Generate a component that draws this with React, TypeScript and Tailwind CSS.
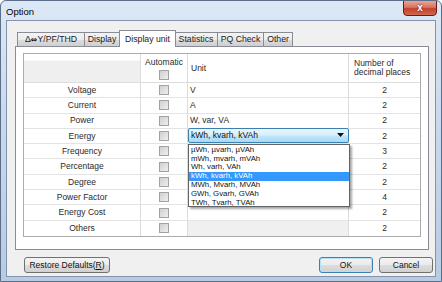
const rows = [
  { label: "Voltage", unit: "V", dec: "2" },
  { label: "Current", unit: "A", dec: "2" },
  { label: "Power", unit: "W, var, VA", dec: "2" },
  { label: "Energy", unit: "kWh, kvarh, kVAh", dec: "2", combo: true },
  { label: "Frequency", unit: "", dec: "3" },
  { label: "Percentage", unit: "", dec: "2" },
  { label: "Degree", unit: "", dec: "2" },
  { label: "Power Factor", unit: "", dec: "4" },
  { label: "Energy Cost", unit: "", dec: "2" },
  { label: "Others", unit: "", dec: "2", disabled: true },
];

const energyUnits = [
  "µWh, µvarh, µVAh",
  "mWh, mvarh, mVAh",
  "Wh, varh, VAh",
  "kWh, kvarh, kVAh",
  "MWh, Mvarh, MVAh",
  "GWh, Gvarh, GVAh",
  "TWh, Tvarh, TVAh",
];

const tabs = [
  { label: "Δ⇔Y/PF/THD", w: "w-[68px]" },
  { label: "Display", w: "w-[36px]" },
  { label: "Display unit", w: "w-[57px]", active: true },
  { label: "Statistics", w: "w-[44px]" },
  { label: "PQ Check", w: "w-[47px]" },
  { label: "Other", w: "w-[30px]" },
];

function Checkbox() {
  return (
    <div className="w-[10px] h-[10px] border border-[#a2a2a2] bg-[linear-gradient(135deg,#d0d0d0,#eeeeee)]" />
  );
}

function Button({ children, className = "" }: { children: React.ReactNode; className?: string }) {
  return (
    <div
      className={`h-[16px] flex items-center justify-center rounded-[3px] border text-[8.5px] text-[#111] bg-[linear-gradient(180deg,#f4f4f4_0%,#ebebeb_48%,#dddddd_52%,#d1d1d1_100%)] ${className}`}
    >
      {children}
    </div>
  );
}

function TabLabel({ label }: { label: string }) {
  if (!label.includes("⇔")) return <>{label}</>;
  const [a, b] = label.split("⇔");
  return (
    <>
      {a}
      <span className="font-['DejaVu_Sans',sans-serif] font-bold text-[8px]">⇔</span>
      {b}
    </>
  );
}

export default function App() {
  return (
    <div className="w-[442px] h-[282px] flex flex-col overflow-hidden rounded-t-[6px] border border-[#5d6f88] bg-[linear-gradient(180deg,#dce8f5_0%,#c9daee_40%,#b7cbe3_100%)] font-['Liberation_Sans','DejaVu_Sans',sans-serif] text-[#1a1a1a]">
      {/* title bar */}
      <div className="h-[19px] flex items-start shrink-0">
        <div className="pl-[5px] pt-[4px] text-[9.5px] text-black">Option</div>
        <div className="ml-auto mr-[4px] w-[34px] h-[16px] -mt-px flex items-center justify-center rounded-b-[4px] border border-[#6d1c12] bg-[linear-gradient(180deg,#e8a597_0%,#d8735f_45%,#c4412c_55%,#d2664f_100%)]">
          <span className="text-white font-bold text-[10px] leading-none [text-shadow:0_0_2px_#5a1208]">x</span>
        </div>
      </div>

      {/* client area */}
      <div className="mx-[5px] h-[257px] border border-[#8293ab] bg-[#f0f0f0] flex flex-col shrink-0">
        <div className="pl-[8px] pt-[8px]">
          {/* tabs */}
          <div className="flex items-end h-[17px] pl-[2px] relative z-10">
            {tabs.map((t) =>
              t.active ? (
                <div
                  key={t.label}
                  className={`${t.w} h-[17px] -mx-px -mb-px bg-white border border-b-0 border-[#898c95] flex items-start justify-center pt-[2px] text-[8.7px] relative z-10`}
                >
                  <TabLabel label={t.label} />
                </div>
              ) : (
                <div
                  key={t.label}
                  className={`${t.w} h-[14px] -ml-px first:ml-0 border border-b-0 border-[#898c95] flex items-center justify-center text-[8.7px] bg-[linear-gradient(180deg,#f3f3f3_0%,#ebebeb_50%,#dddddd_51%,#cfcfcf_100%)]`}
                >
                  <TabLabel label={t.label} />
                </div>
              ),
            )}
          </div>

          {/* panel */}
          <div className="w-[414px] h-[204px] bg-white border border-[#898c95] pl-[7px] pt-[6px]">
            <div className="w-[398px] border border-[#ababab] text-[8.5px] text-[#2a2a2a]">
              {/* header */}
              <div className="flex h-[29px] border-b border-[#dcdcdc]">
                <div className="w-[117px] border-r border-[#dcdcdc] bg-[linear-gradient(180deg,#ffffff_0%,#ffffff_22%,#efefef_26%,#efefef_100%)]" />
                <div className="w-[47px] border-r border-[#dcdcdc] flex flex-col items-center pt-[4px] gap-[3px]">
                  <span className="leading-none">Automatic</span>
                  <Checkbox />
                </div>
                <div className="w-[161px] border-r border-[#dcdcdc] flex items-center pl-[3px]">Unit</div>
                <div className="flex-1 flex flex-col justify-center pl-[5px] leading-[9px]">
                  <span>Number of</span>
                  <span>decimal places</span>
                </div>
              </div>

              {rows.map((r, i) => (
                <div
                  key={r.label}
                  className={`flex h-[15.3px] ${i < rows.length - 1 ? "border-b border-[#e3e3e3]" : ""}`}
                >
                  <div className="w-[117px] border-r border-[#dcdcdc] flex items-center justify-center">{r.label}</div>
                  <div className="w-[47px] border-r border-[#dcdcdc] flex items-center justify-center">
                    <Checkbox />
                  </div>
                  <div
                    className={`w-[161px] border-r border-[#dcdcdc] flex items-center pl-[2px] relative ${r.disabled ? "bg-[#f0f0f0]" : ""}`}
                  >
                    {r.combo ? (
                      <>
                        <div className="absolute left-0 top-[-1px] w-[161px] h-[15px] border border-[#3c7fb1] rounded-[2px] bg-[linear-gradient(180deg,#eaf6fd_0%,#d9f0fc_45%,#bee6fd_55%,#a7d9f5_100%)] flex items-center pl-[2px] text-[#111]">
                          <span>{r.unit}</span>
                          <svg className="ml-auto mr-[4px]" width="7" height="4" viewBox="0 0 7 4">
                            <path d="M0 0H7L3.5 4Z" fill="#111" />
                          </svg>
                        </div>
                        <div className="absolute left-0 top-[15px] w-[162px] h-[63px] bg-white border border-[#646464] z-20 shadow-[2px_2px_2px_rgba(0,0,0,0.35)] pt-px">
                          {energyUnits.map((u, j) => (
                            <div
                              key={u}
                              className={`h-[8.8px] leading-[8.8px] text-[7.8px] pl-[2px] overflow-hidden ${j === 3 ? "bg-[#3399ff] text-white" : "text-[#111]"}`}
                            >
                              {u}
                            </div>
                          ))}
                        </div>
                      </>
                    ) : (
                      r.unit
                    )}
                  </div>
                  <div className="flex-1 flex items-center justify-center">{r.dec}</div>
                </div>
              ))}
            </div>
          </div>
        </div>

        {/* buttons */}
        <div className="flex items-center mt-[7px] pl-[17px]">
          <Button className="w-[86px] border-[#707070]">
            Restore Defaults(<span className="underline">R</span>)
          </Button>
          <Button className="ml-auto w-[54px] border-[#3c7fb1] shadow-[inset_0_0_0_1px_#b6e0f7]">OK</Button>
          <Button className="ml-[6px] mr-[2px] w-[54px] border-[#707070]">Cancel</Button>
        </div>
      </div>
    </div>
  );
}
